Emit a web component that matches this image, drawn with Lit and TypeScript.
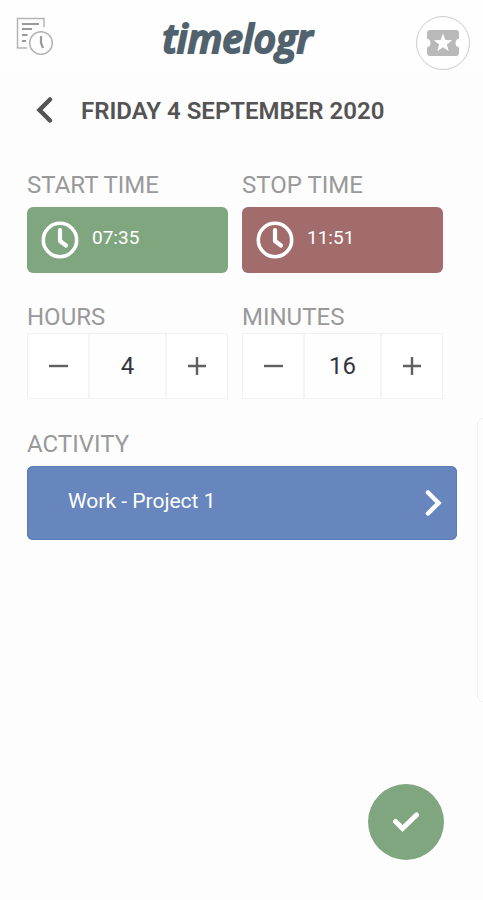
import { LitElement, html, css, svg } from "lit";
import { customElement, property, state } from "lit/decorators.js";

const clockIcon = svg`<svg viewBox="0 0 38 38" width="38" height="38" fill="none" stroke="#fff" aria-hidden="true">
  <circle cx="19" cy="19" r="16.7" stroke-width="3.6"/>
  <path d="M19 9V20L25 24.500" stroke-width="4.2" stroke-linecap="round" stroke-linejoin="round"/>
</svg>`;

@customElement("number-stepper")
export class NumberStepper extends LitElement {
  static styles = css`
    :host {
      display: block;
    }
    .label {
      display: block;
      font-size: 24px;
      line-height: 32px;
      color: #999;
    }
    .box {
      display: grid;
      grid-template-columns: 3fr 4fr 3fr;
      height: 66px;
      box-sizing: border-box;
      border: 1px solid #f2f2f2;
      background: #fff;
    }
    .step,
    .value {
      font: inherit;
      border: 0;
      margin: 0;
      padding: 0;
      min-width: 0;
      background: none;
      border-radius: 0;
    }
    .step {
      display: grid;
      place-items: center;
      cursor: pointer;
    }
    .value {
      text-align: center;
      font-size: 24px;
      color: #33333f;
      border-left: 2px solid #f4f4f4;
      border-right: 2px solid #f4f4f4;
      background: #fefefe;
    }
  `;

  @property() label = "";
  @property({ type: Number }) value = 0;

  private change(by: number) {
    this.value = Math.max(0, this.value + by);
  }

  render() {
    return html`
      <label class="label" for="value">${this.label}</label>
      <div class="box">
        <button class="step" aria-label="Decrease" @click=${() => this.change(-1)}>
          <svg viewBox="0 0 20 20" width="20" height="20" stroke="#606060" stroke-width="2.4" aria-hidden="true">
            <path d="M1 10H20" />
          </svg>
        </button>
        <input class="value" id="value" type="text" inputmode="numeric" .value=${String(this.value)} />
        <button class="step" aria-label="Increase" @click=${() => this.change(1)}>
          <svg viewBox="0 0 20 20" width="20" height="20" stroke="#606060" stroke-width="2.4" aria-hidden="true">
            <path d="M1 10H19M10 1V19" />
          </svg>
        </button>
      </div>
    `;
  }
}

@customElement("app-root")
export class AppRoot extends LitElement {
  static styles = css`
    :host {
      display: flex;
      flex-direction: column;
      position: relative;
      box-sizing: border-box;
      min-height: 100vh;
      overflow: hidden;
      background: #fdfdfd;
      font-family: Roboto, "Liberation Sans", sans-serif;
      color: #545454;
    }
    button {
      font: inherit;
      margin: 0;
      border: 0;
      padding: 0;
      background: none;
      color: inherit;
      cursor: pointer;
    }
    svg {
      display: block;
      flex: none;
    }
    .bar {
      display: flex;
      justify-content: space-between;
      align-items: center;
      height: 72px;
      padding: 0 13px 0 15px;
      background: #fefefe;
    }
    .report {
      width: 44px;
    }
    .logo {
      padding-top: 4px;
      font-family: "Open Sans", "Noto Sans", sans-serif;
      font-size: 39px;
      line-height: 40px;
      font-weight: 600;
      font-style: italic;
      color: #50626e;
      -webkit-text-stroke: 2px #50626e;
      text-shadow: 1px 1px 1px #b4bcc2;
    }
    .badge {
      display: grid;
      place-items: center;
      width: 54px;
      height: 54px;
      margin-top: 14px;
      box-sizing: border-box;
      border: 1px solid #cbcbcb;
      border-radius: 50%;
      background: #fff;
    }
    main {
      display: flex;
      flex-direction: column;
      flex: 1;
      padding: 0 26px 40px 27px;
    }
    .day {
      display: flex;
      align-items: center;
      gap: 27px;
      height: 76px;
      padding-left: 8px;
    }
    h1 {
      margin: 0;
      padding-top: 2px;
      font-size: 24px;
      line-height: 32px;
      font-weight: 600;
    }
    .pair {
      display: grid;
      grid-template-columns: 1fr 1fr;
    }
    .cell {
      padding-right: 14px;
    }
    .label {
      display: block;
      font-size: 24px;
      line-height: 32px;
      color: #999;
    }
    .times {
      margin: 21px 0 28px;
    }
    .time {
      display: flex;
      align-items: center;
      gap: 13px;
      width: 100%;
      height: 66px;
      margin-top: 6px;
      padding: 0 14px;
      border-radius: 6px;
      font-size: 19px;
      line-height: 24px;
      color: #fff;
    }
    .time span,
    .activity span {
      padding-bottom: 4px;
    }
    .start {
      background: #80a67f;
    }
    .stop {
      background: #a16c6b;
    }
    .activity {
      display: flex;
      align-items: center;
      justify-content: space-between;
      width: 100%;
      height: 74px;
      margin-top: 6px;
      padding: 0 14px 0 41px;
      border-radius: 6px;
      background: #6686bd;
      box-shadow: inset 0 0 0 1px #5b7cb6;
      font-size: 21px;
      line-height: 28px;
      color: #fff;
    }
    .group {
      margin-top: 29px;
    }
    .save {
      display: grid;
      place-items: center;
      align-self: flex-end;
      width: 76px;
      height: 76px;
      margin: auto 13px 0 0;
      border-radius: 50%;
      background: #80a67f;
    }
    .drawer {
      position: absolute;
      top: 418px;
      right: -10px;
      width: 16px;
      height: 284px;
      box-sizing: border-box;
      border: 1px solid #f3f3f3;
      border-radius: 6px;
    }
  `;

  @state() private start = "07:35";
  @state() private stop = "11:51";

  render() {
    return html`
      <header class="bar">
        <button class="report" aria-label="Time reports">
          <svg viewBox="0 0 40 40" width="40" height="40" fill="none" stroke="#b4b4b4" aria-hidden="true">
            <path d="M12 32H2.500V2.500H29V11" stroke-width="1.500" />
            <path d="M7 8H24M7 13H17M7 19H12.500M7 25H11" stroke="#999" stroke-width="2" />
            <circle cx="26" cy="27" r="11.300" stroke-width="1.500" />
            <path d="M26 20V27L28 32" stroke="#999" stroke-width="2.200" />
          </svg>
        </button>
        <div class="logo">timelogr</div>
        <button class="badge" aria-label="Offers">
          <svg viewBox="0 0 32 26" width="32" height="26" aria-hidden="true">
            <path fill="#b9b9b9" d="M3 0H29Q32 0 32 3V8.500Q28.500 9.500 28.500 13T32 17.500V23Q32 26 29 26H3Q0 26 0 23V17.500Q3.500 16.500 3.500 13T0 8.500V3Q0 0 3 0Z" />
            <path fill="#fff" d="M16 3.500L18.400 9.900L25.200 10.200L19.900 14.400L21.700 21L16 17.300L10.300 21L12.100 14.400L6.800 10.200L13.600 9.900Z" />
          </svg>
        </button>
      </header>

      <main>
        <div class="day">
          <button aria-label="Back">
            <svg viewBox="0 0 19 28" width="19" height="28" fill="none" stroke="#545454" stroke-width="4.500" stroke-linecap="round" aria-hidden="true">
              <path d="M15 3.500L4.500 14L15 24.500" />
            </svg>
          </button>
          <h1>FRIDAY 4 SEPTEMBER 2020</h1>
        </div>

        <div class="pair times">
          <div class="cell">
            <label class="label" for="start">START TIME</label>
            <button class="time start" id="start">${clockIcon}<span>${this.start}</span></button>
          </div>
          <div class="cell">
            <label class="label" for="stop">STOP TIME</label>
            <button class="time stop" id="stop">${clockIcon}<span>${this.stop}</span></button>
          </div>
        </div>

        <div class="pair">
          <number-stepper class="cell" label="HOURS" .value=${4}></number-stepper>
          <number-stepper class="cell" label="MINUTES" .value=${16}></number-stepper>
        </div>

        <div class="group">
          <label class="label" for="activity">ACTIVITY</label>
          <button class="activity" id="activity">
            <span>Work - Project 1</span>
            <svg viewBox="0 0 19 28" width="19" height="28" fill="none" stroke="#fff" stroke-width="4.500" stroke-linecap="round" aria-hidden="true">
              <path d="M4 3.500L14.500 14L4 24.500" />
            </svg>
          </button>
        </div>

        <button class="save" aria-label="Save">
          <svg viewBox="0 0 28 22" width="28" height="22" fill="none" stroke="#fff" stroke-width="5" stroke-linecap="round" aria-hidden="true">
            <path d="M3.500 10.500L10.500 17.500L24.500 4" />
          </svg>
        </button>
      </main>
      <aside class="drawer" aria-hidden="true"></aside>
    `;
  }
}
